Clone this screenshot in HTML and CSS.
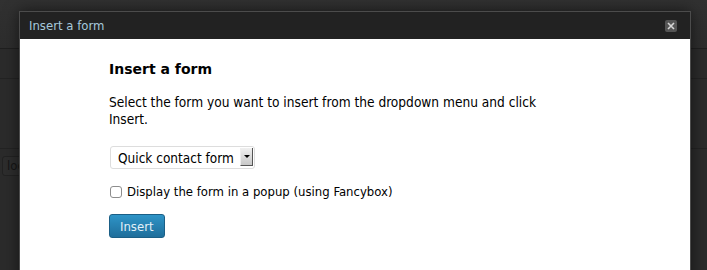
FILE: index.html
```html
<!DOCTYPE html>
<html lang="en">
<head>
  <meta charset="UTF-8" />
  <title>Insert a form</title>
  <link rel="stylesheet" href="styles.css">
</head>
<body>
  <div class="page">
    <div class="page-header"></div>
    <div class="page-row"></div>
    <div class="page-row tall"></div>
    <div class="search">
      <input type="text" value="locate" readonly />
    </div>
  </div>

  <div class="modal">
    <div class="modal-title">
      <span>Insert a form</span>
      <button class="close-btn" title="Close">
        <svg width="8" height="8" viewBox="0 0 8 8">
          <path d="M1 1 L7 7 M7 1 L1 7" stroke="#d6d6d6" stroke-width="1.6" />
        </svg>
      </button>
    </div>

    <div class="modal-body">
      <h3>Insert a form</h3>
      <p>Select the form you want to insert from the dropdown menu and click Insert.</p>

      <div class="select-wrap">
        <select>
          <option>Quick contact form</option>
        </select>
        <span class="select-arrow"></span>
      </div>

      <label class="check-row">
        <input type="checkbox" />
        Display the form in a popup (using Fancybox)
      </label>

      <button class="insert-btn">Insert</button>
    </div>
  </div>
</body>
</html>
```

FILE: styles.css
```css
body {
  margin: 0;
  font-family: 'DejaVu Sans Condensed', 'DejaVu Sans', sans-serif;
  font-stretch: condensed;
  background-color: #2b2b2b;
  overflow: hidden;
  height: 270px;
}

/* page behind the overlay */
.page-header {
  height: 48px;
  background: linear-gradient(#313131, #2d2d2d);
  border-bottom: 1px solid #1f1f1f;
}

.page-row {
  height: 29px;
  border-bottom: 1px solid #232323;
}

.page-row.tall {
  height: 69px;
}

.search {
  padding-top: 6px;
  padding-left: 2px;
}

.search input {
  width: 60px;
  height: 18px;
  padding: 0 4px;
  border: 1px solid #222;
  border-radius: 3px;
  background: #2d2d2d;
  color: #151515;
  font-family: inherit;
  font-size: 13px;
}

/* dialog */
.modal {
  position: absolute;
  top: 11px;
  left: 19px;
  width: 670px;
  height: 300px;
  background: #fff;
  border: 1px solid #4c4c4c;
  border-bottom: none;
  box-shadow: 0 0 14px rgba(0, 0, 0, 0.55);
}

.modal-title {
  height: 27px;
  background-color: #222;
  display: flex;
  align-items: center;
  justify-content: space-between;
  padding: 0 13px 0 9px;
}

.modal-title span {
  color: #a6c8db;
  font-size: 13px;
}

.close-btn {
  width: 12px;
  height: 12px;
  padding: 0;
  border: none;
  border-radius: 2px;
  background-color: #555;
  display: flex;
  align-items: center;
  justify-content: center;
  cursor: pointer;
}

.modal-body {
  padding: 21px 89px 0;
  color: #000;
}

.modal-body h3 {
  margin: 0 0 16px;
  font-family: 'DejaVu Sans', sans-serif;
  font-stretch: normal;
  font-size: 14px;
  line-height: 18px;
}

.modal-body p {
  margin: 0 0 18px;
  max-width: 450px;
  font-size: 13.6px;
  line-height: 17px;
}

.select-wrap {
  position: relative;
  display: inline-block;
  margin-left: 1px;
}

.select-wrap select {
  appearance: none;
  -webkit-appearance: none;
  height: 23px;
  width: 145px;
  padding: 0 0 0 7px;
  border: 1px solid #ddd;
  border-radius: 3px;
  background: #fff;
  font-family: inherit;
  font-size: 13.5px;
  color: #000;
}

.select-arrow {
  position: absolute;
  top: 2px;
  right: 2px;
  width: 11px;
  height: 17px;
  background: linear-gradient(#f0f0f0, #c8c8c8);
  border-right: 1px solid #555;
  border-bottom: 1px solid #555;
  border-left: 1px solid #eee;
}

.select-arrow::after {
  content: '';
  position: absolute;
  top: 7px;
  left: 3px;
  border-left: 3px solid transparent;
  border-right: 3px solid transparent;
  border-top: 3px solid #000;
}

.check-row {
  display: flex;
  align-items: center;
  gap: 5px;
  margin: 14px 0 14px 1px;
  font-size: 13px;
  line-height: 17px;
}

.check-row input {
  appearance: none;
  -webkit-appearance: none;
  width: 12px;
  height: 12px;
  margin: 0;
  border: 1px solid #8d8d8d;
  border-radius: 3px;
  background: #fff;
}

.insert-btn {
  height: 24px;
  padding: 0 10px;
  border: 1px solid #1b5f86;
  border-radius: 3px;
  background: linear-gradient(#2e94c7, #1f6e9b);
  color: #e2f1f9;
  font-family: inherit;
  font-size: 13px;
  cursor: pointer;
}
```
